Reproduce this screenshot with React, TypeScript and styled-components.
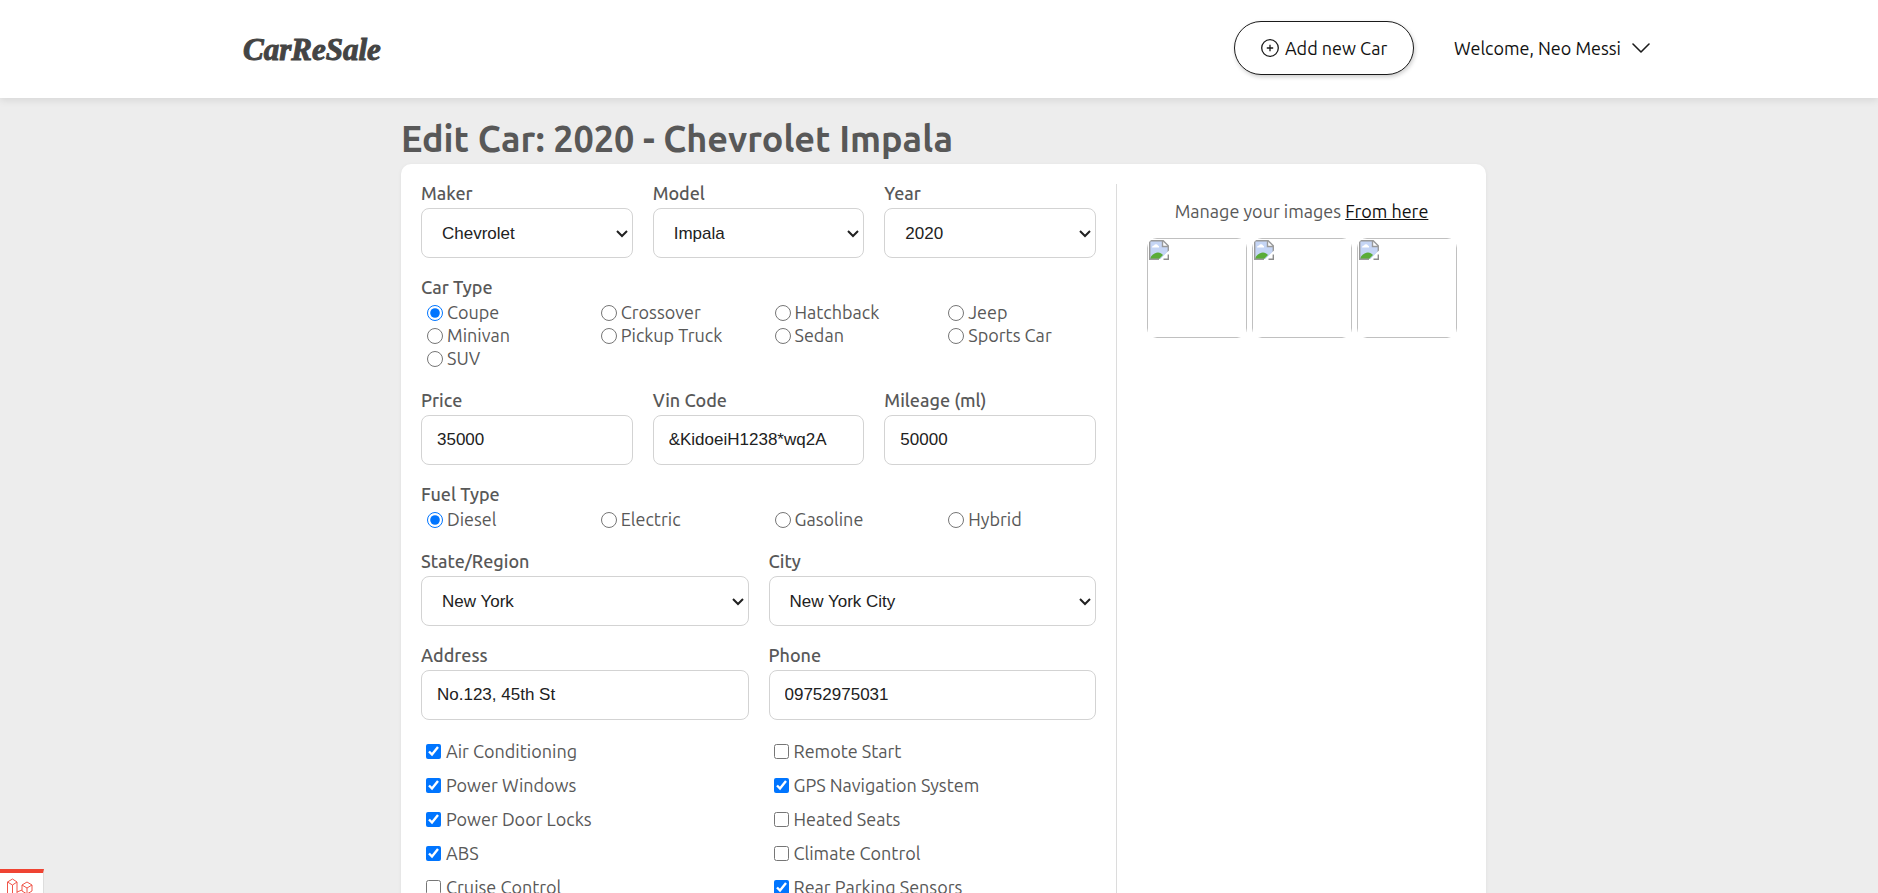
import React from "react";
import styled, { createGlobalStyle } from "styled-components";

const GlobalStyle = createGlobalStyle`
  *, *::before, *::after { box-sizing: border-box; }
  body {
    margin: 0;
    background: #ededed;
    color: #585858;
    font-family: Ubuntu, "Noto Sans", sans-serif;
    font-size: 18px;
    line-height: 23px;
  }
`;

const Shell = styled.div`
  min-height: 100vh;
`;

const Header = styled.header`
  background: #fff;
  box-shadow: 0 2px 8px rgba(0, 0, 0, 0.1);
`;

const HeaderInner = styled.div`
  display: flex;
  align-items: center;
  justify-content: space-between;
  max-width: 1422px;
  height: 98px;
  margin: 0 auto;
  padding-left: 15px;
`;

const Logo = styled.a`
  padding-top: 2px;
  color: #444;
  font-family: "Liberation Serif", serif;
  font-size: 31px;
  font-weight: 700;
  font-style: italic;
  line-height: 32px;
  text-decoration: none;
  -webkit-text-stroke: 1px #444;
`;

const Nav = styled.nav`
  display: flex;
  align-items: center;
  gap: 40px;
  padding-bottom: 2px;
`;

const AddButton = styled.button`
  display: flex;
  align-items: center;
  justify-content: center;
  gap: 6px;
  width: 180px;
  height: 54px;
  border: 1px solid #1b1b1b;
  border-radius: 27px;
  background: #fff;
  box-shadow: 1px 2px 4px rgba(0, 0, 0, 0.2);
  color: #111;
  font: inherit;
  cursor: pointer;
`;

const UserMenu = styled.button`
  display: flex;
  align-items: center;
  gap: 11px;
  padding: 0;
  border: 0;
  background: none;
  color: #111;
  font: inherit;
  cursor: pointer;
`;

const Page = styled.main`
  max-width: 1094px;
  margin: 0 auto;
  padding: 17px 0 0 9px;
`;

const Title = styled.h1`
  margin: 0;
  padding-bottom: 1px;
  color: #585858;
  font-size: 36px;
  font-weight: 700;
  line-height: 48px;
`;

const Card = styled.form`
  display: flex;
  padding: 20px;
  border-radius: 10px;
  background: #fff;
  box-shadow: 0 1px 4px rgba(0, 0, 0, 0.06);
`;

const Fields = styled.div`
  display: flex;
  flex: 1;
  flex-direction: column;
  gap: 20px;
  padding-right: 20px;
`;

const Row = styled.div<{ $cols: number }>`
  display: grid;
  grid-template-columns: repeat(${(p) => p.$cols}, minmax(0, 1fr));
  column-gap: 20px;
`;

const FeatureRow = styled(Row)`
  row-gap: 11px;
`;

const Field = styled.div`
  display: flex;
  flex-direction: column;
`;

const Label = styled.label`
  font-weight: 500;
  line-height: 18px;
  padding-bottom: 6px;
`;

const Group = styled.fieldset`
  min-width: 0;
  margin: 0;
  padding: 0 0 1px;
  border: 0;
`;

const Legend = styled.legend`
  padding: 0 0 5px;
  font-weight: 500;
  line-height: 18px;
`;

const Input = styled.input`
  width: 100%;
  height: 50px;
  padding: 0 15px;
  border: 1px solid #d3d3d3;
  border-radius: 8px;
  background: #fff;
  color: #212121;
  font-family: "Liberation Sans", Arial, sans-serif;
  font-size: 17px;
`;

const SelectBox = styled.div`
  position: relative;

  svg {
    position: absolute;
    top: 22px;
    right: 5px;
    pointer-events: none;
  }
`;

const Select = styled.select`
  display: block;
  width: 100%;
  height: 50px;
  padding: 0 24px 0 20px;
  border: 1px solid #d3d3d3;
  border-radius: 8px;
  appearance: none;
  background: #fff;
  color: #212121;
  font-family: "Liberation Sans", Arial, sans-serif;
  font-size: 17px;
`;

const Option = styled.label`
  display: flex;
  align-items: center;
  gap: 4px;
  padding-left: 6px;
`;

const FeatureOption = styled(Option)`
  gap: 5px;
  padding-left: 5px;
`;

const Radio = styled.input`
  width: 16px;
  height: 16px;
  margin: 0;
  accent-color: #0075ff;
`;

const Check = styled(Radio)`
  width: 15px;
  height: 15px;
`;

const Images = styled.aside`
  width: 350px;
  padding: 16px 0 0 20px;
  border-left: 1px solid #dcdcdc;
`;

const ImagesText = styled.p`
  margin: 0 0 15px;
  text-align: center;
`;

const ImagesLink = styled.a`
  color: #111;
`;

const Thumbs = styled.div`
  display: flex;
  justify-content: center;
  gap: 5px;
`;

const Thumb = styled.div`
  width: 100px;
  height: 100px;
  border-radius: 10px;
  overflow: hidden;
`;

const ThumbFrame = styled.div`
  height: 100%;
  padding: 1px;
  border: 1px solid #c0c0c0;
`;

const Badge = styled.div`
  position: fixed;
  bottom: 0;
  left: 0;
  width: 44px;
  height: 24px;
  border-top: 4px solid #ef4433;
  border-right: 1px solid #ddd;
  background: #fff;
  overflow: hidden;
`;

const carTypes = ["Coupe", "Crossover", "Hatchback", "Jeep", "Minivan", "Pickup Truck", "Sedan", "Sports Car", "SUV"];
const fuelTypes = ["Diesel", "Electric", "Gasoline", "Hybrid"];
const features: [string, boolean][] = [
  ["Air Conditioning", true],
  ["Remote Start", false],
  ["Power Windows", true],
  ["GPS Navigation System", true],
  ["Power Door Locks", true],
  ["Heated Seats", false],
  ["ABS", true],
  ["Climate Control", false],
  ["Cruise Control", false],
  ["Rear Parking Sensors", true],
];

function SelectField({ id, label, value }: { id: string; label: string; value: string }) {
  return (
    <Field>
      <Label htmlFor={id}>{label}</Label>
      <SelectBox>
        <Select id={id} defaultValue={value}>
          <option>{value}</option>
        </Select>
        <svg width="12" height="8" viewBox="0 0 12 8" fill="none" stroke="#212121" strokeWidth="2" aria-hidden="true">
          <path d="M1 1L6 6L11 1" />
        </svg>
      </SelectBox>
    </Field>
  );
}

function TextField({ id, label, value }: { id: string; label: string; value: string }) {
  return (
    <Field>
      <Label htmlFor={id}>{label}</Label>
      <Input id={id} defaultValue={value} />
    </Field>
  );
}

function RadioGroup({ name, title, options }: { name: string; title: string; options: string[] }) {
  return (
    <Group>
      <Legend>{title}</Legend>
      <Row $cols={4}>
        {options.map((option, i) => (
          <Option key={option}>
            <Radio type="radio" name={name} defaultChecked={i === 0} />
            {option}
          </Option>
        ))}
      </Row>
    </Group>
  );
}

function MissingImage() {
  return (
    <svg width="20" height="20" viewBox="0 0 20 20" display="block" aria-hidden="true">
      <path d="M1 1H14L19 6V12L12 19H1Z" fill="#c5d5f5" />
      <path d="M3 7.500a2 2 0 0 1 2-2 2.200 2.200 0 0 1 4 0 1.500 1.500 0 0 1 1 2Z" fill="#fff" />
      <path d="M1 19C2 15 6 12.500 9 12.500C11 12.500 12.500 13.500 14 15L10 19Z" fill="#5aac38" />
      <path d="M13.500 1V6.500H19Z" fill="#fff" />
      <path d="M19.300 12V5.800L14.200 0.700H0.700V19.300H10M13.500 1V6.500H19" fill="none" stroke="#9a9a9a" strokeWidth="1.400" />
      <path d="M20 10.500L10.500 20H14L20 14.500Z" fill="#fff" />
      <path d="M19.300 14.500V19.300H14.500" fill="none" stroke="#8c8c8c" strokeWidth="1.400" />
    </svg>
  );
}

export default function App() {
  return (
    <Shell>
      <GlobalStyle />
      <Header>
        <HeaderInner>
          <Logo href="#">CarReSale</Logo>
          <Nav>
            <AddButton type="button">
              <svg width="18" height="18" viewBox="0 0 18 18" fill="none" stroke="#1b1b1b" strokeWidth="1.300" aria-hidden="true">
                <circle cx="9" cy="9" r="8.300" />
                <path d="M9 5.800V12.200M5.800 9H12.200" />
              </svg>
              Add new Car
            </AddButton>
            <UserMenu type="button">
              Welcome, Neo Messi
              <svg width="18" height="10" viewBox="0 0 18 10" fill="none" stroke="#1b1b1b" strokeWidth="1.600" strokeLinecap="round" strokeLinejoin="round" aria-hidden="true">
                <path d="M1 1L9 9L17 1" />
              </svg>
            </UserMenu>
          </Nav>
        </HeaderInner>
      </Header>
      <Page>
        <Title>Edit Car: 2020 - Chevrolet Impala</Title>
        <Card>
          <Fields>
            <Row $cols={3}>
              <SelectField id="maker" label="Maker" value="Chevrolet" />
              <SelectField id="model" label="Model" value="Impala" />
              <SelectField id="year" label="Year" value="2020" />
            </Row>
            <RadioGroup name="carType" title="Car Type" options={carTypes} />
            <Row $cols={3}>
              <TextField id="price" label="Price" value="35000" />
              <TextField id="vin" label="Vin Code" value="&KidoeiH1238*wq2A" />
              <TextField id="mileage" label="Mileage (ml)" value="50000" />
            </Row>
            <RadioGroup name="fuelType" title="Fuel Type" options={fuelTypes} />
            <Row $cols={2}>
              <SelectField id="state" label="State/Region" value="New York" />
              <SelectField id="city" label="City" value="New York City" />
            </Row>
            <Row $cols={2}>
              <TextField id="address" label="Address" value="No.123, 45th St" />
              <TextField id="phone" label="Phone" value="09752975031" />
            </Row>
            <FeatureRow $cols={2}>
              {features.map(([name, on]) => (
                <FeatureOption key={name}>
                  <Check type="checkbox" defaultChecked={on} />
                  {name}
                </FeatureOption>
              ))}
            </FeatureRow>
          </Fields>
          <Images>
            <ImagesText>
              Manage your images <ImagesLink href="#">From here</ImagesLink>
            </ImagesText>
            <Thumbs>
              {[1, 2, 3].map((n) => (
                <Thumb key={n}>
                  <ThumbFrame>
                    <MissingImage />
                  </ThumbFrame>
                </Thumb>
              ))}
            </Thumbs>
          </Images>
        </Card>
      </Page>
      <Badge>
        <svg width="43" height="20" viewBox="0 0 43 20" fill="none" stroke="#f0564a" strokeWidth="1" strokeLinejoin="round" aria-hidden="true">
          <path d="M7.500 22V9L12.500 6L17 9V22M7.500 9L12.500 12L17 9M12.500 12V22M22 12L27 9L32 12V18L27 21L22 18ZM22 12L27 15L32 12M27 15V21M17 19L22 17" />
        </svg>
      </Badge>
    </Shell>
  );
}
